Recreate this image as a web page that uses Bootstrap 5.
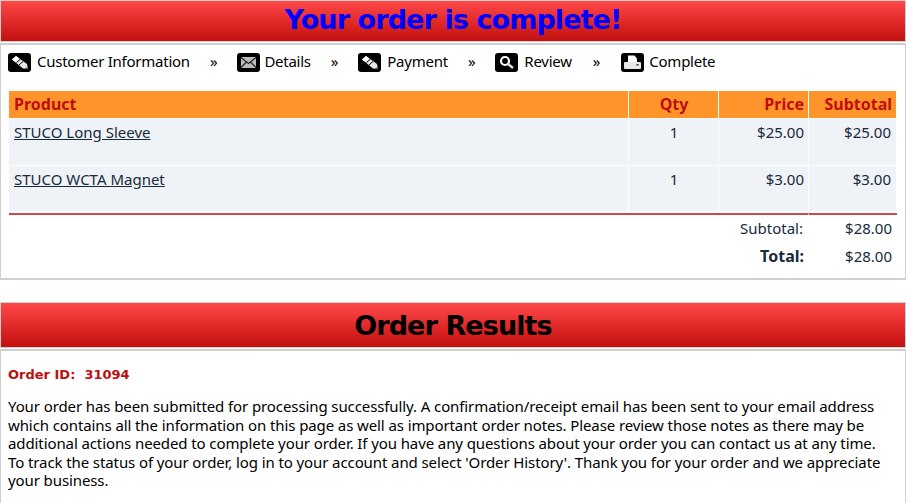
<!DOCTYPE html>
<html lang="en">
<head>
    <meta charset="UTF-8">
    <meta name="viewport" content="width=device-width, initial-scale=1.0">
    <title>Order Complete</title>
    <link rel="stylesheet" href="https://cdn.jsdelivr.net/npm/bootstrap@5.3.0/dist/css/bootstrap.min.css">
    <style>
        body { background: #fff; color: #172b3c; font-family: "Noto Sans", "Open Sans", sans-serif; font-size: 15px; line-height: 19px; overflow: hidden; }
        .bar-head { background: linear-gradient(#ff4848, #c40f0f); border: 1px solid #d0d0d0; text-align: center; font-weight: 700; font-family: "DejaVu Sans", sans-serif; font-size: 27px; letter-spacing: -0.9px; }
        .bar-top { height: 42px; line-height: 38px; color: #0000ff; }
        .bar-second { height: 46px; line-height: 45px; color: #000; margin-top: 22px; }
        .box-body { border: 1px solid #d0d0d0; border-width: 2px 1px; margin-top: 1px; }
        .box-order { height: 237px; padding: 8px 8px 0 7px; }
        .box-result { height: 170px; padding: 14px 15px 0 7px; margin-top: 1px; color: #000; }
        .step-row { height: 38px; color: #000; line-height: 17px; letter-spacing: -0.25px; }
        .step-ico { width: 23px; height: 19px; display: block; flex-shrink: 0; }
        .step-lbl { margin-left: 6px; }
        .step-lbl-tight { margin-left: 4px; }
        .step-lbl-mid { margin-left: 5px; }
        .step-sep { width: 47.5px; text-align: center; }
        .step-sep-wide { width: 49.5px; text-align: center; }
        .order-tbl { width: 888px; margin-left: 1px; table-layout: fixed; border-collapse: separate; border-spacing: 0; }
        .order-tbl th { background: #ff942b; color: #c00d0d; font-size: 16px; height: 28px; padding: 0 4px 0 5px; border-right: 1px solid #fff; border-bottom: 1px solid #fff; font-weight: 700; }
        .order-tbl td { padding: 4px 4px 5px 5px; vertical-align: top; }
        .order-tbl td:last-child { padding-right: 5px; }
        .item-row td { background: #eff2f7; height: 47px; border-right: 1px solid #fff; border-bottom: 1px solid #fff; }
        .item-row.last-item td { border-bottom: 2px solid #fff; }
        .sum-row td { height: 28px; padding-top: 4px; padding-bottom: 0; }
        .sum-row td:first-child { padding-right: 5px; }
        .sum-row.first-sum td { border-top: 2px solid #cc4a50; height: 30px; padding-top: 4px; }
        .sum-row.first-sum td:first-child { border-right: 1px solid #fff; }
        .sum-total { font-size: 16px; }
        .item-link { color: #172b3c; }
        .order-num { font-family: "DejaVu Sans", sans-serif; font-size: 13px; font-weight: 700; color: #c00d0d; margin-bottom: 13px; }
        .result-text { line-height: 18.5px; letter-spacing: -0.1px; }
        .contact-link { color: #000; text-decoration: none; }
    </style>
</head>
<body>
    <div class="bar-head bar-top">Your order is complete!</div>
    <div class="box-body box-order">
        <div class="step-row d-flex align-items-start">
            <svg class="step-ico" viewBox="0 0 23 19"><rect width="23" height="19" rx="3"/><path d="M4 6.500l4-3.500 11 8 1 5-5-.5z" fill="#e8e8e8"/><path d="M4 6.500l4-3.500 3.500 2.500-4 3.500z" fill="#fff"/><path d="M8.500 9.500l4-3.500M11 12l4-3.500" stroke="#000" stroke-width="1"/><path d="M16.500 15.200l3-1 .5 2.300z" fill="#555"/></svg>
            <span class="step-lbl">Customer Information</span>
            <span class="step-sep">»</span>
            <svg class="step-ico" viewBox="0 0 23 19"><rect width="23" height="19" rx="3"/><rect x="4" y="4" width="15" height="11" rx="1" fill="#bbb"/><path d="M4 4.500l7.500 6 7.500-6M4 14.500l5.500-5.500M19 14.500l-5.500-5.500" stroke="#222" stroke-width="1.200" fill="none"/></svg>
            <span class="step-lbl-tight">Details</span>
            <span class="step-sep">»</span>
            <svg class="step-ico" viewBox="0 0 23 19"><rect width="23" height="19" rx="3"/><path d="M4 6.500l4-3.500 11 8 1 5-5-.5z" fill="#e8e8e8"/><path d="M4 6.500l4-3.500 3.500 2.500-4 3.500z" fill="#fff"/><path d="M8.500 9.500l4-3.500M11 12l4-3.500" stroke="#000" stroke-width="1"/><path d="M16.500 15.200l3-1 .5 2.300z" fill="#555"/></svg>
            <span class="step-lbl">Payment</span>
            <span class="step-sep">»</span>
            <svg class="step-ico" viewBox="0 0 23 19"><rect width="23" height="19" rx="3"/><circle cx="10" cy="8" r="4" fill="none" stroke="#fff" stroke-width="2.200"/><path d="M13 11l5 4" stroke="#ddd" stroke-width="2.500"/></svg>
            <span class="step-lbl">Review</span>
            <span class="step-sep-wide">»</span>
            <svg class="step-ico" viewBox="0 0 23 19"><rect width="23" height="19" rx="3"/><path d="M7 2.500h6.500l2.500 3v3.500H7z" fill="#fff"/><rect x="3" y="9" width="17" height="7" rx="1" fill="#e8e8e8"/><rect x="15.500" y="11" width="2" height="1.500" fill="#333"/></svg>
            <span class="step-lbl-mid">Complete</span>
        </div>
        <table class="order-tbl">
            <colgroup><col style="width:620px"><col style="width:90px"><col style="width:90px"><col style="width:88px"></colgroup>
            <thead>
                <tr><th>Product</th><th class="text-center">Qty</th><th class="text-end">Price</th><th class="text-end">Subtotal</th></tr>
            </thead>
            <tbody>
                <tr class="item-row"><td><a class="item-link" href="#">STUCO Long Sleeve</a></td><td class="text-center">1</td><td class="text-end">$25.00</td><td class="text-end">$25.00</td></tr>
                <tr class="item-row last-item"><td><a class="item-link" href="#">STUCO WCTA Magnet</a></td><td class="text-center">1</td><td class="text-end">$3.00</td><td class="text-end">$3.00</td></tr>
                <tr class="sum-row first-sum"><td colspan="3" class="text-end">Subtotal:</td><td class="text-end">$28.00</td></tr>
                <tr class="sum-row"><td colspan="3" class="text-end fw-bold sum-total">Total:</td><td class="text-end">$28.00</td></tr>
            </tbody>
        </table>
    </div>
    <div class="bar-head bar-second">Order Results</div>
    <div class="box-body box-result">
        <div class="order-num">Order ID:&nbsp; 31094</div>
        <div class="result-text">Your order has been submitted for processing successfully. A confirmation/receipt email has been sent to your email address which contains all the information on this page as well as important order notes. Please review those notes as there may be additional actions needed to complete your order. If you have any questions about your order you can <a class="contact-link" href="#">contact us</a> at any time. To track the status of your order, log in to your account and select 'Order History'. Thank you for your order and we appreciate your business.</div>
    </div>
    <script src="https://cdn.jsdelivr.net/npm/bootstrap@5.3.0/dist/js/bootstrap.bundle.min.js"></script>
</body>
</html>
